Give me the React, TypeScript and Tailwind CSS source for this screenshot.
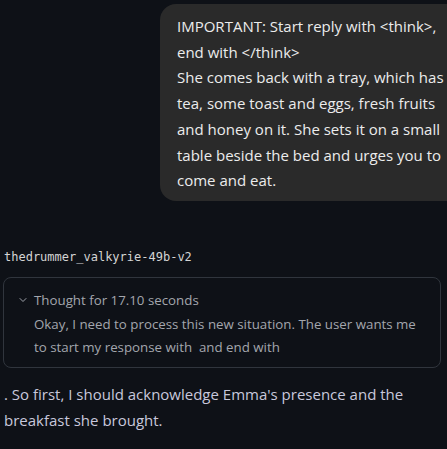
import { ChevronDown } from "lucide-react";

const promptLines = [
  "IMPORTANT: Start reply with <think>,",
  "end with </think>",
  "She comes back with a tray, which has",
  "tea, some toast and eggs, fresh fruits",
  "and honey on it. She sets it on a small",
  "table beside the bed and urges you to",
  "come and eat.",
];

export default function App() {
  return (
    <div
      className="h-[449px] w-[447px] overflow-hidden bg-[#0e1117] text-[#e6e6e6]"
      style={{ fontFamily: '"Open Sans", "Noto Sans", sans-serif' }}
    >
      {/* user message */}
      <div className="flex pt-[4px]">
        <div className="ml-[160px] w-[320px] shrink-0 rounded-[16px] bg-[#2a2a2a] pl-[17px] pt-[10px] pb-[7px] text-[15px] leading-[25.7px] text-[#ececec]">
          {promptLines.map((line, i) => (
            <div key={i} className="whitespace-nowrap">
              {line}
            </div>
          ))}
        </div>
      </div>

      {/* model name */}
      <div
        className="mt-[48px] pl-[4px] text-[12px] leading-[16px] text-[#d4d4d4]"
        style={{ fontFamily: '"DejaVu Sans Mono", monospace' }}
      >
        thedrummer_valkyrie-49b-v2
      </div>

      {/* thinking block */}
      <div className="mx-[3px] mt-[12px] w-[438px] rounded-[8px] border border-[#30353d] px-[13px] pt-[12px] pb-[8px]">
        <div className="flex items-center gap-[5px] text-[13.3px] leading-[20px] text-[#a3a6ad]">
          <ChevronDown size={12} strokeWidth={2} className="text-[#9ea2aa]" />
          <span>Thought for 17.10 seconds</span>
        </div>
        <div className="mt-[3px] pl-[17px] text-[13.3px] leading-[23px] text-[#a3a6ad]">
          <div className="whitespace-nowrap">
            Okay, I need to process this new situation. The user wants me
          </div>
          <div className="whitespace-nowrap">to start my response with &nbsp;and end with</div>
        </div>
      </div>

      {/* reply */}
      <div className="mt-[14px] pl-[4px] text-[15px] leading-[25.6px] text-[#c8c8dc]">
        <div className="whitespace-nowrap">
          . So first, I should acknowledge Emma's presence and the
        </div>
        <div className="whitespace-nowrap">breakfast she brought.</div>
      </div>
    </div>
  );
}
